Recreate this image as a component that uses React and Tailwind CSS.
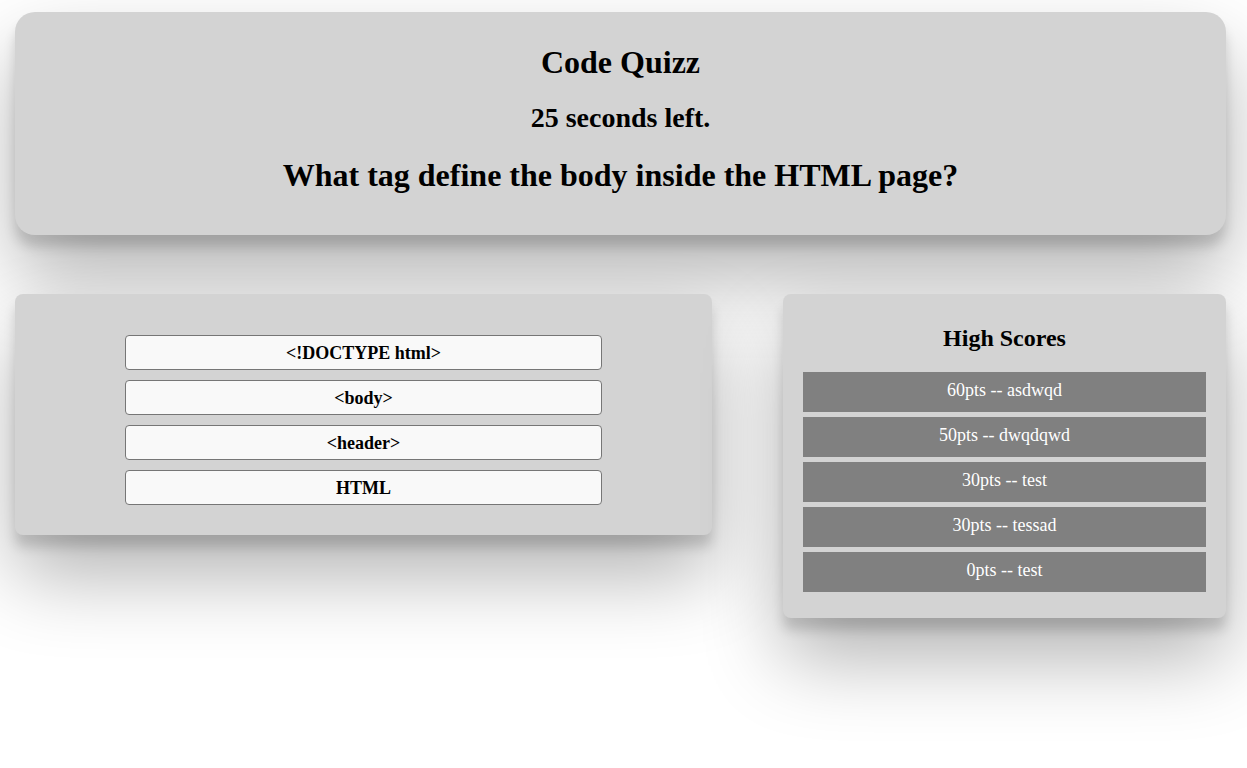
import React from 'react';

const answers = ['<!DOCTYPE html>', '<body>', '<header>', 'HTML'];

const scores = [
  { pts: 60, name: 'asdwqd' },
  { pts: 50, name: 'dwqdqwd' },
  { pts: 30, name: 'test' },
  { pts: 30, name: 'tessad' },
  { pts: 0, name: 'test' },
];

const App = () => {
  return (
    <div className="min-h-screen bg-white pt-[12px] pl-[15px] pr-[21px] text-black" style={{ fontFamily: '"Liberation Serif", "Times New Roman", serif' }}>
      {/* header */}
      <div className="bg-[#d3d3d3] rounded-[20px] shadow-[0_40px_80px_rgba(0,0,0,0.3),0_12px_12px_rgba(0,0,0,0.15)] pt-[30px] pb-[40px] text-center">
        <h1 className="text-[32px] font-bold leading-[40px]">Code Quizz</h1>
        <h2 className="text-[28px] font-bold leading-[40px] mt-[16px]">25 seconds left.</h2>
        <h1 className="text-[32px] font-bold leading-[40px] mt-[17px]">What tag define the body inside the HTML page?</h1>
      </div>

      <div className="flex flex-row items-start justify-between mt-[59px]">
        {/* answers */}
        <div className="w-[697px] bg-[#d3d3d3] rounded-[8px] shadow-[0_40px_80px_rgba(0,0,0,0.3),0_12px_12px_rgba(0,0,0,0.15)] pt-[41px] pb-[30px] flex flex-col items-center gap-[10px]">
          {answers.map(answer => (
            <button key={answer} className="w-[477px] h-[35px] bg-[#f9f9f9] border border-[#767676] rounded-[4px] text-[18px] font-bold leading-none">
              {answer}
            </button>
          ))}
        </div>

        {/* high scores */}
        <div className="w-[443px] bg-[#d3d3d3] rounded-[8px] shadow-[0_40px_80px_rgba(0,0,0,0.3),0_12px_12px_rgba(0,0,0,0.15)] px-[20px] pt-[28px] pb-[26px]">
          <h2 className="text-[24px] font-bold text-center leading-[32px] mb-[18px]">High Scores</h2>
          <ul className="flex flex-col gap-[5px]">
            {scores.map((score, i) => (
              <li key={i} className="h-[40px] bg-[#808080] text-white text-[18px] flex items-center justify-center pb-[3px]">
                {score.pts}pts -- {score.name}
              </li>
            ))}
          </ul>
        </div>
      </div>
    </div>
  );
};

export default App;
